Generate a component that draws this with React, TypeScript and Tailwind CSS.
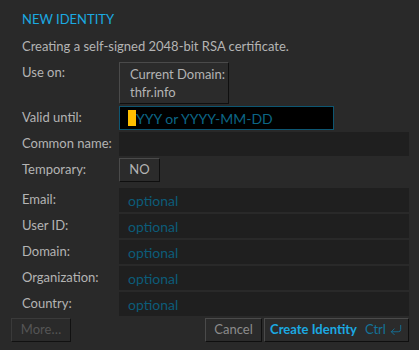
import { CornerDownLeft } from "lucide-react";

const optionalRows = ["Email:", "User ID:", "Domain:", "Organization:", "Country:"];

function Label({ children }: { children: React.ReactNode }) {
  return <div className="h-6 flex items-center text-[#b4b4b4]">{children}</div>;
}

export default function App() {
  return (
    <div
      className="w-[419px] h-[350px] bg-[#292929] text-[13px] overflow-hidden"
      style={{ fontFamily: "Lato, 'Open Sans', sans-serif" }}
    >
      <div className="pl-[22px] pr-[10px] pt-[12px]">
        <div className="h-[16px] flex items-center text-[#1ba9e1] text-[13px]">NEW IDENTITY</div>
        <div className="mt-[11px] h-[16px] flex items-center text-[#b4b4b4]">
          Creating a self-signed 2048-bit RSA certificate.
        </div>

        <div className="mt-[7px] grid grid-cols-[97px_1fr] gap-y-[2px]">
          {/* use on */}
          <div className="h-[22px] flex items-center text-[#b4b4b4]">Use on:</div>
          <div>
            <div className="w-[110px] h-[42px] bg-[#2b2b2b] border border-t-[#4a4a4a] border-l-[#4a4a4a] border-b-[#0f0f0f] border-r-[#0f0f0f] pl-[10px] pt-[2px] leading-[18px] text-[#b4b4b4]">
              <div>Current Domain:</div>
              <div>thfr.info</div>
            </div>
          </div>

          <Label>Valid until:</Label>
          <div>
            <div className="w-[215px] h-6 bg-black border border-[#0d5672] flex items-center pl-[8px]">
              <span className="w-[8px] h-[16px] bg-[#ffbf00]" />
              <span className="text-[#0c6686] text-[14px]">YYY or YYYY-MM-DD</span>
            </div>
          </div>

          <Label>Common name:</Label>
          <div className="h-6 bg-[#1f1f1f]" />

          <Label>Temporary:</Label>
          <div>
            <div className="w-[41px] h-6 bg-[#2b2b2b] border border-t-[#4a4a4a] border-l-[#4a4a4a] border-b-[#0f0f0f] border-r-[#0f0f0f] flex items-center justify-center text-[#b4b4b4]">
              NO
            </div>
          </div>

          <div className="col-span-2 h-[2px]" />

          {optionalRows.map((l) => (
            <div key={l} className="contents">
              <Label>{l}</Label>
              <div className="h-6 bg-[#1f1f1f] flex items-center pl-[9px] text-[#0c5c79] text-[14px]">optional</div>
            </div>
          ))}
        </div>
      </div>

      <div className="mt-[2px] pl-[11px] pr-[10px] flex items-center">
        <div className="w-[60px] h-6 bg-[#2a2a2a] border border-[#3a3a3a] border-b-[#111] border-r-[#111] flex items-center justify-center text-[#555555]">
          More…
        </div>
        <div className="flex-1" />
        <div className="w-[57px] h-6 bg-[#2b2b2b] border border-t-[#4a4a4a] border-l-[#4a4a4a] border-b-[#0f0f0f] border-r-[#0f0f0f] flex items-center justify-center text-[#8c8c8c]">
          Cancel
        </div>
        <div className="ml-[2px] w-[145px] h-6 bg-[#2b2b2b] border border-t-[#4a4a4a] border-l-[#4a4a4a] border-b-[#0f0f0f] border-r-[#0f0f0f] flex items-center justify-center gap-[8px]">
          <span className="font-bold text-[#1ba9e1]">Create Identity</span>
          <span className="flex items-center gap-[3px] text-[#14749a]">
            Ctrl
            <CornerDownLeft size={14} strokeWidth={1.5} />
          </span>
        </div>
      </div>
    </div>
  );
}
